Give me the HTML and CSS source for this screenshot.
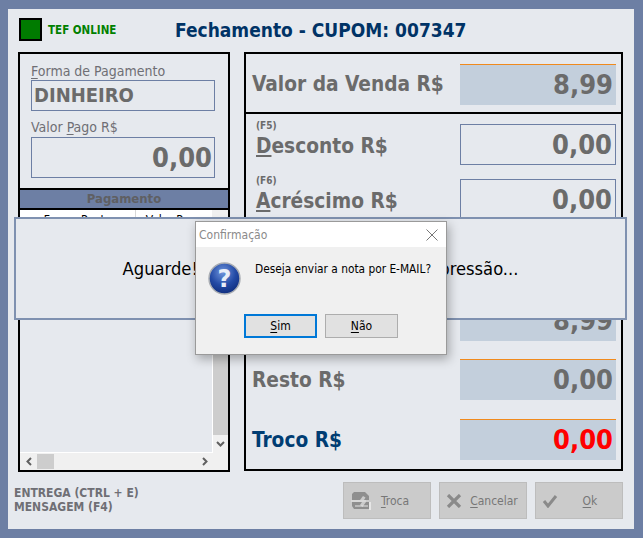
FILE: index.html
```html
<!DOCTYPE html>
<html lang="pt-BR">
<head>
<meta charset="utf-8">
<title>Fechamento</title>
<link rel="stylesheet" href="styles.css">
</head>
<body>
<main class="window">
  <header class="top">
    <span class="tef-led"></span>
    <span class="tef-text">TEF ONLINE</span>
    <h1 class="title">Fechamento - CUPOM: 007347</h1>
  </header>
  <div class="columns">
    <section class="left">
      <div class="form">
        <div class="lbl"><u>F</u>orma de Pagamento</div>
        <div class="input input-forma">DINHEIRO</div>
        <div class="lbl lbl-pago">Valor <u>P</u>ago R$</div>
        <div class="input input-valor">0,00</div>
      </div>
      <div class="grid-head">Pagamento</div>
      <div class="grid-cols">
        <span class="col col-a">Forma Pagto</span>
        <span class="col col-b">Valor Pago</span>
        <span class="col-fill"></span>
      </div>
      <div class="grid-body">
        <div class="grid-area"></div>
        <div class="vbar">
          <div class="vtrack"></div>
          <div class="arrow"><svg width="9" height="6" viewBox="0 0 9 6"><path d="M1 1l3.5 3.5L8 1" fill="none" stroke="#606060" stroke-width="2"/></svg></div>
        </div>
      </div>
      <div class="hbar">
        <div class="harrow"><svg width="6" height="9" viewBox="0 0 6 9"><path d="M5 1L1.500 4.500 5 8" fill="none" stroke="#606060" stroke-width="2"/></svg></div>
        <div class="hthumb"></div>
        <div class="hspace"></div>
        <div class="harrow"><svg width="6" height="9" viewBox="0 0 6 9"><path d="M1 1l3.500 3.500L1 8" fill="none" stroke="#606060" stroke-width="2"/></svg></div>
        <div class="hcorner"></div>
      </div>
    </section>
    <section class="right">
      <div class="sec sec-venda">
        <div class="row">
          <div class="rlabel big">Valor da Venda R$</div>
          <div class="box box-calc">8,99</div>
        </div>
      </div>
      <div class="sec sec-edit">
        <div class="row row-edit">
          <div class="rlabel"><small>(F5)</small><span class="big"><u>D</u>esconto R$</span></div>
          <div class="box box-edit">0,00</div>
        </div>
        <div class="row row-edit">
          <div class="rlabel"><small>(F6)</small><span class="big"><u>A</u>créscimo R$</span></div>
          <div class="box box-edit">0,00</div>
        </div>
      </div>
      <div class="sec sec-total">
        <div class="row row-total">
          <div class="rlabel big">Pago R$</div>
          <div class="box box-calc">8,99</div>
        </div>
        <div class="row row-total">
          <div class="rlabel big">Total R$</div>
          <div class="box box-calc">8,99</div>
        </div>
        <div class="row row-total">
          <div class="rlabel big">Resto R$</div>
          <div class="box box-calc">0,00</div>
        </div>
        <div class="row">
          <div class="rlabel big troco">Troco R$</div>
          <div class="box box-calc red">0,00</div>
        </div>
      </div>
    </section>
  </div>
  <footer class="bottom">
    <div class="hints">ENTREGA (CTRL + E)<br>MENSAGEM (F4)</div>
    <div class="actions">
      <button class="btn" type="button">
        <svg width="22" height="20" viewBox="0 0 22 20"><path d="M4 1h11l4 4v4h-5l1.500-2.500L13 5l-3 4H2V3zM2 11h10l-2 3 2.500 2L16 11h3v7H4l-2-3z" fill="#8f8f8f"/><path d="M1 10h15M5 15h13" stroke="#e6e6e6" stroke-width="1.200"/><path d="M19 11h2v8h-2z" fill="#e6e6e6"/></svg>
        <span class="btn-text btn-troca"><u>T</u>roca</span>
      </button>
      <button class="btn" type="button">
        <svg width="16" height="14" viewBox="0 0 16 14"><path d="M2 1l12 12M14 1L2 13" stroke="#8a8a8a" stroke-width="3.200"/></svg>
        <span class="btn-text btn-cancel"><u>C</u>ancelar</span>
      </button>
      <button class="btn" type="button">
        <svg width="16" height="14" viewBox="0 0 16 14"><path d="M2 7l4 5 8-10" fill="none" stroke="#8a8a8a" stroke-width="3"/></svg>
        <span class="btn-text btn-ok"><u>O</u>k</span>
      </button>
    </div>
  </footer>
</main>

<div class="wait">Aguarde! Finalizando o processo de impressão...</div>

<div class="dialog" role="dialog">
  <div class="d-title">
    <span>Confirmação</span>
    <svg width="12" height="12" viewBox="0 0 12 12"><path d="M.5.5l11 11M11.500.5l-11 11" stroke="#777" stroke-width="1"/></svg>
  </div>
  <div class="d-body">
    <div class="d-msg">
      <svg class="d-icon" width="33" height="33" viewBox="0 0 33 33">
        <defs>
          <radialGradient id="qg" cx="45%" cy="30%" r="75%">
            <stop offset="0" stop-color="#6f95dc"/>
            <stop offset=".55" stop-color="#234aa5"/>
            <stop offset="1" stop-color="#0d2a78"/>
          </radialGradient>
        </defs>
        <circle cx="16.500" cy="16.500" r="15.500" fill="url(#qg)" stroke="#a9adb3" stroke-width="1.500"/>
        <text class="d-q" x="16.500" y="25" text-anchor="middle">?</text>
      </svg>
      <span class="d-text">Deseja enviar a nota por E-MAIL?</span>
    </div>
    <div class="d-actions">
      <button class="d-btn d-default" type="button"><u>S</u>im</button>
      <button class="d-btn" type="button"><u>N</u>ão</button>
    </div>
  </div>
</div>
</body>
</html>
```

FILE: styles.css
```css
* { box-sizing: border-box; }
html, body { height: 100%; }
body {
  margin: 0;
  padding: 9px 9px 9px 8px;
  position: relative;
  background: #6d7fa4;
  font-family: "DejaVu Sans", sans-serif;
  font-stretch: condensed;
  overflow: hidden;
}
u { text-underline-offset: 2px; }
.window {
  height: 520px;
  background: #e6e9ee;
  padding: 0 11px 0 10px;
  display: flex;
  flex-direction: column;
}
.top {
  height: 43px;
  display: flex;
  align-items: center;
  padding: 0 0 2px 1px;
}
.tef-led {
  width: 23px;
  height: 23px;
  background: #007b00;
  border: 2px solid #000;
}
.tef-text {
  margin-left: 6px;
  width: 127px;
  font-size: 11.5px;
  font-weight: 700;
  color: #008000;
}
.title {
  margin: 0;
  font-size: 19px;
  font-weight: 700;
  color: #003366;
  white-space: nowrap;
}
.columns {
  height: 420px;
  display: flex;
  gap: 14px;
}
.left {
  width: 212px;
  border: 2px solid #000;
  display: flex;
  flex-direction: column;
}
.form {
  height: 134px;
  padding: 9px 13px 0 11px;
}
.lbl {
  font-size: 14px;
  line-height: 16px;
  color: #6f6f75;
}
.lbl-pago { margin-top: 8px; }
.input {
  border: 1px solid #6d7fa4;
  color: #6b6b6b;
  font-weight: 700;
}
.input-forma {
  height: 31px;
  margin-top: 1px;
  padding-left: 2px;
  font-size: 20px;
  line-height: 28px;
}
.input-valor {
  height: 41px;
  margin-top: 2px;
  padding-right: 2px;
  font-size: 27px;
  line-height: 39px;
  text-align: right;
}
.grid-head {
  height: 22px;
  background: #6d7fa4;
  border-top: 2px solid #000;
  border-bottom: 2px solid #000;
  color: #5f5f63;
  font-size: 13px;
  font-weight: 700;
  line-height: 18px;
  text-align: center;
}
.grid-cols {
  height: 20px;
  display: flex;
  font-size: 12px;
  line-height: 20px;
  color: #000;
  background: #fff;
}
.col { text-align: center; }
.col-a { width: 116px; border-right: 1px solid #d8d8d8; }
.col-b { width: 76px; }
.col-fill { flex: 1; background: #f0f0f0; }
.grid-body {
  flex: 1;
  display: flex;
  min-height: 0;
}
.grid-area { flex: 1; border-bottom: 1px solid #fff; border-right: 1px solid #fff; }
.vbar {
  width: 15px;
  display: flex;
  flex-direction: column;
  background: #f0f0f0;
}
.vtrack { flex: 1; background: #cdcdcd; }
.arrow {
  height: 18px;
  display: flex;
  align-items: center;
  justify-content: center;
}
.hbar {
  height: 17px;
  display: flex;
  align-items: center;
  background: #f0f0f0;
}
.harrow {
  width: 17px;
  height: 17px;
  display: flex;
  align-items: center;
  justify-content: center;
}
.hthumb { width: 17px; height: 15px; background: #cdcdcd; }
.hspace { flex: 1; }
.hcorner { width: 15px; }
.right {
  width: 379px;
  height: 419px;
  border: 2px solid #000;
  display: flex;
  flex-direction: column;
}
.sec { padding: 0 5px 0 6px; }
.sec-venda {
  height: 60px;
  padding-top: 10px;
  border-bottom: 2px solid #000;
}
.sec-venda .rlabel { margin-top: -2px; }
.sec-edit {
  height: 121px;
  padding-top: 10px;
  border-bottom: 2px solid #000;
  display: flex;
  flex-direction: column;
  gap: 14px;
}
.sec-total {
  flex: 1;
  padding-top: 5px;
  display: flex;
  flex-direction: column;
}
.row {
  height: 41px;
  display: flex;
  justify-content: space-between;
  align-items: center;
}
.row-total { margin-bottom: 19px; }
.row-total:nth-child(2) { margin-bottom: 18px; }
.rlabel { color: #6b6b6b; font-weight: 700; }
.big { font-size: 20.7px; font-weight: 700; }
.rlabel small {
  display: block;
  font-size: 10px;
  line-height: 12px;
  margin-top: -10px;
  padding-left: 4px;
}
.rlabel small + .big { display: block; line-height: 25px; padding-left: 4px; margin-top: 2px; }
.troco { color: #003d73; }
.box {
  width: 156px;
  height: 41px;
  padding-right: 3px;
  font-size: 27px;
  font-weight: 700;
  line-height: 40px;
  text-align: right;
  color: #6b6b6b;
}
.box-calc { background: #c3cfdc; border-top: 1px solid #f08a1d; }
.box-edit { border: 1px solid #6d7fa4; }
.red { color: #f00; }
.bottom {
  flex: 1;
  display: flex;
  justify-content: space-between;
  padding: 10px 0 0 0;
  margin-left: -4px;
}
.hints {
  padding-top: 4px;
  font-size: 12px;
  font-weight: 700;
  line-height: 14px;
  color: #6f6f75;
}
.actions { display: flex; gap: 8px; }
.btn {
  position: relative;
  width: 88px;
  height: 37px;
  padding: 0 0 0 6px;
  display: flex;
  align-items: center;
  background: #cbcbcb;
  border: 1px solid #bdbdbd;
  font: inherit;
  font-size: 12px;
  color: #777;
}
.btn-text { flex: 1; text-align: center; }
.btn-troca { padding-right: 12px; }
.wait {
  position: absolute;
  left: 14px;
  top: 217px;
  width: 613px;
  height: 103px;
  background: #e6e9ee;
  border: 2px solid #7f91b0;
  font-size: 18.2px;
  line-height: 99px;
  text-align: center;
  color: #000;
}
.dialog {
  position: absolute;
  left: 195px;
  top: 221px;
  width: 252px;
  height: 134px;
  display: flex;
  flex-direction: column;
  background: #f0f0f0;
  border: 1px solid #9a9a9a;
  box-shadow: 2px 4px 10px rgba(0, 0, 0, .3);
}
.d-title {
  height: 25px;
  flex: none;
  padding: 0 8px 0 3px;
  display: flex;
  align-items: center;
  justify-content: space-between;
  background: #fff;
  font-size: 12px;
  color: #8a8a8a;
}
.d-body { flex: 1; display: flex; flex-direction: column; }
.d-msg {
  height: 67px;
  padding: 15px 0 0 12px;
  display: flex;
  align-items: flex-start;
  font-size: 11.8px;
  color: #000;
}
.d-icon { flex: none; }
.d-text { margin: 0 0 0 14px; white-space: nowrap; }
.d-q { font: 700 24px "DejaVu Sans", sans-serif; fill: #e8edf8; }
.d-actions {
  display: flex;
  gap: 8px;
  padding-left: 48px;
}
.d-btn {
  width: 73px;
  height: 24px;
  padding: 0;
  background: #e1e1e1;
  border: 1px solid #adadad;
  font: inherit;
  font-size: 12px;
  color: #000;
}
.d-default { border: 2px solid #0078d7; }
```
